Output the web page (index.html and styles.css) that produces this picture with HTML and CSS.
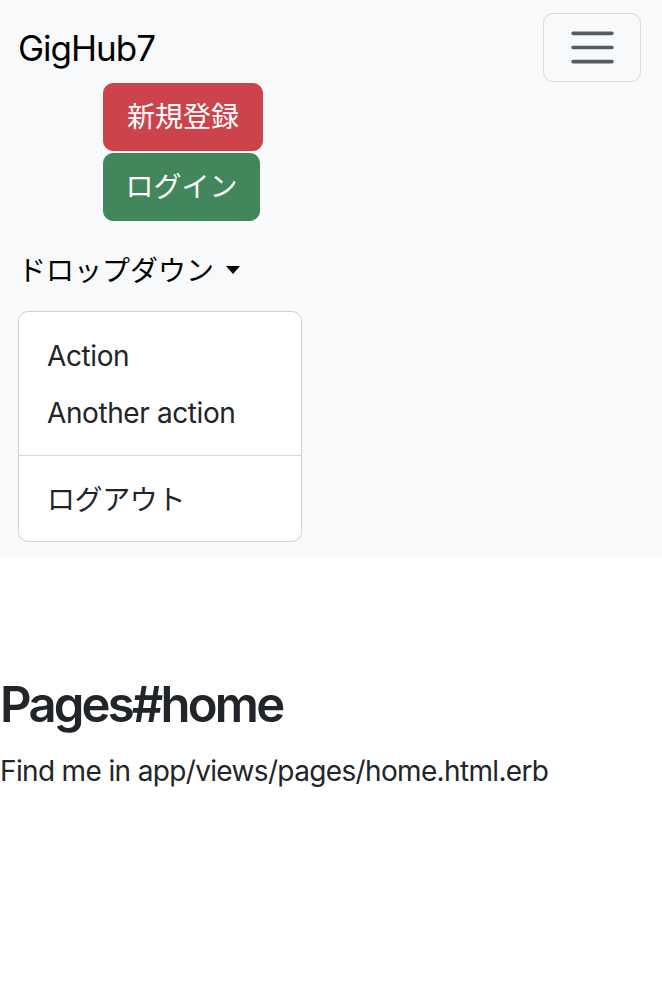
FILE: index.html
```html
<!DOCTYPE html>
<html lang="ja">
<head>
<meta charset="utf-8">
<title>GigHub7</title>
<link rel="stylesheet" href="styles.css">
</head>
<body>
<nav class="navbar">
  <div class="nav-top">
    <a class="brand" href="#">GigHub7</a>
    <button class="toggler" type="button" aria-label="Toggle navigation">
      <svg class="toggler-icon" viewBox="0 0 30 30" width="53" height="53" aria-hidden="true">
        <path d="M4 7h22M4 15h22M4 23h22" stroke="rgba(33,37,41,0.75)" stroke-width="2" stroke-linecap="round" fill="none"/>
      </svg>
    </button>
  </div>
  <div class="collapse">
    <div class="auth">
      <a class="btn btn-danger" href="#">新規登録</a>
      <a class="btn btn-success" href="#">ログイン</a>
    </div>
    <div class="dropdown">
      <a class="nav-link" href="#">ドロップダウン<span class="caret"></span></a>
      <ul class="menu">
        <li><a class="menu-item" href="#">Action</a></li>
        <li><a class="menu-item" href="#">Another action</a></li>
        <li><hr class="divider"></li>
        <li><a class="menu-item" href="#">ログアウト</a></li>
      </ul>
    </div>
  </div>
</nav>
<main class="content">
  <h1 class="title">Pages#home</h1>
  <p class="lead">Find me in app/views/pages/home.html.erb</p>
</main>
</body>
</html>
```
FILE: styles.css
```css
* { box-sizing: border-box; }
html, body { margin: 0; padding: 0; }
body {
  font-family: Inter, "Noto Sans CJK JP", sans-serif;
  font-size: 28px;
  color: #212529;
  background: #fff;
}
a { text-decoration: none; }

.navbar {
  background: #f8f9fa;
  padding: 13px 21px 15px 18px;
}
.nav-top {
  display: flex;
  justify-content: space-between;
  align-items: center;
  height: 70px;
}
.brand {
  font-size: 35px;
  line-height: 70px;
  letter-spacing: -1px;
  color: #000;
}
.toggler {
  width: 98px;
  height: 69px;
  margin-top: -1px;
  padding: 0;
  border: 1px solid rgba(33,37,41,0.15);
  border-radius: 10px;
  background: transparent;
  display: flex;
  align-items: center;
  justify-content: center;
}
.toggler-icon { display: block; }

.auth {
  display: flex;
  flex-direction: column;
  align-items: flex-start;
  gap: 2px;
  margin-left: 85px;
}
.btn {
  display: inline-block;
  height: 68px;
  line-height: 66px;
  padding: 0 23px;
  border: 1px solid transparent;
  border-radius: 10px;
  color: #fff;
  font-size: 28px;
}
.btn-danger { background: #cc434b; border-color: #cc434b; }
.btn-success { background: #41875b; border-color: #41875b; padding: 0 21.5px; }

.dropdown { margin-top: 14px; }
.nav-link {
  display: block;
  padding: 15px 0 13px;
  line-height: 43px;
  color: #000;
}
.caret {
  display: inline-block;
  margin-left: 12px;
  vertical-align: 0.255em;
  border-top: 8px solid #000;
  border-left: 7px solid transparent;
  border-right: 7px solid transparent;
}
.menu {
  list-style: none;
  margin: 5px 0 0;
  width: 284px;
  padding: 14px 0;
  background: #fff;
  border: 1px solid rgba(0,0,0,0.175);
  border-radius: 10px;
}
.menu-item {
  display: block;
  padding: 4px 28px 0;
  line-height: 53px;
  letter-spacing: -0.4px;
  color: #212529;
}
.divider {
  margin: 15px 0 14px;
  border: 0;
  border-top: 1px solid rgba(0,0,0,0.15);
}

.content { padding: 0; }
.title {
  margin: 118px 0 14px;
  font-size: 49px;
  font-weight: 600;
  line-height: 59px;
  letter-spacing: -2.8px;
  color: #212529;
}
.lead {
  margin: 0;
  padding-top: 2px;
  line-height: 43px;
  letter-spacing: -0.65px;
}
```
